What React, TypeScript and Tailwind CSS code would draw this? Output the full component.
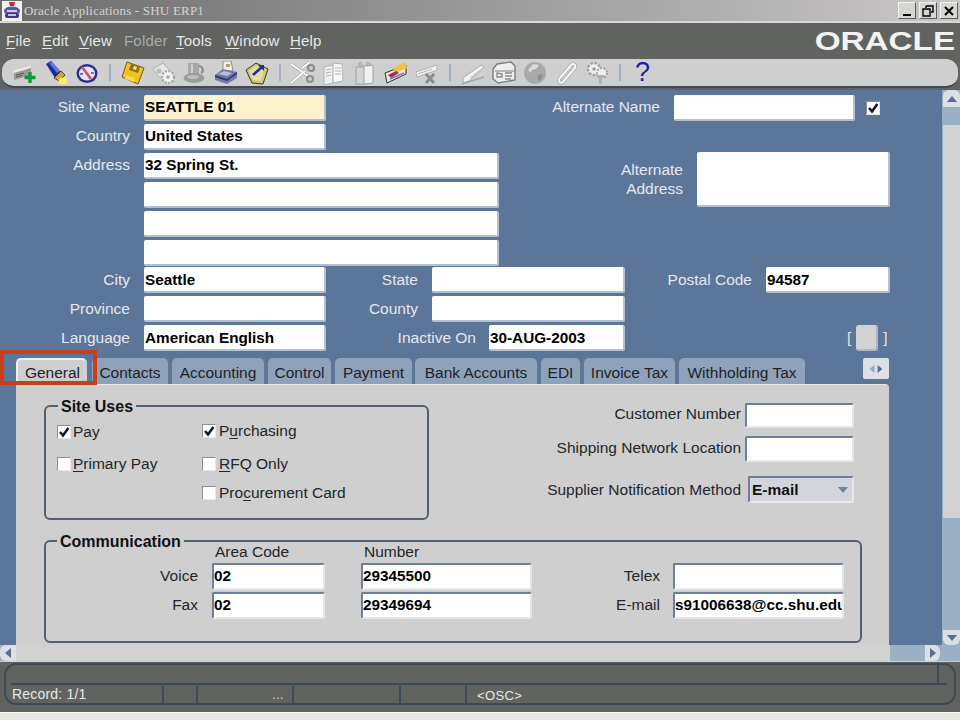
import React from "react";

const onBlue = "text-[#e4e8ee]";

function Label({ className = "", children }: { className?: string; children: React.ReactNode }) {
  return <span className={`shrink-0 text-right whitespace-nowrap ${className}`}>{children}</span>;
}

// white field on the blue canvas
function Field({ className = "", value = "" }: { className?: string; value?: string }) {
  return (
    <div className={`shrink-0 h-[26px] rounded-[2px] bg-white border-r-2 border-b-2 border-[#b4c0cf] pl-[1px] text-[15.3px] font-bold text-black leading-[26px] whitespace-nowrap overflow-hidden ${className}`}>
      {value}
    </div>
  );
}

// sunken field on the gray tab page
function InsetField({ className = "", value = "" }: { className?: string; value?: string }) {
  return (
    <div className={`shrink-0 rounded-[2px] bg-white border-t-2 border-l-2 border-[#6d7f99] border-r-2 border-b-2 border-r-[#e6e6e6] border-b-[#e6e6e6] text-[15.3px] font-bold text-black leading-[22px] whitespace-nowrap overflow-hidden ${className}`}>
      {value}
    </div>
  );
}

function Check({ checked = false, className = "" }: { checked?: boolean; className?: string }) {
  return (
    <span className={`shrink-0 inline-flex items-center justify-center w-[14px] h-[14px] bg-white border-t border-l border-[#8a8f98] border-b border-r border-b-[#e8e8e8] border-r-[#e8e8e8] ${className}`}>
      {checked && (
        <svg width="12" height="12" viewBox="0 0 12 12">
          <path d="M2 6l3 3.4L10.4 2" fill="none" stroke="#10182c" strokeWidth="2.6" />
        </svg>
      )}
    </span>
  );
}

function Ul({ children }: { children: React.ReactNode }) {
  return <span className="underline underline-offset-2">{children}</span>;
}

const tabs = [
  { name: "Contacts", cls: "ml-[5px] w-[76px]" },
  { name: "Accounting", cls: "ml-[4px] w-[92px]" },
  { name: "Control", cls: "ml-[4px] w-[63px]" },
  { name: "Payment", cls: "ml-[4px] w-[77px]" },
  { name: "Bank Accounts", cls: "ml-[3px] w-[122px]" },
  { name: "EDI", cls: "ml-[4px] w-[39px]" },
  { name: "Invoice Tax", cls: "ml-[4px] w-[91px]" },
  { name: "Withholding Tax", cls: "ml-[4px] w-[126px]" },
];

function TitleIcon() {
  return (
    <svg width="20" height="20" viewBox="0 0 20 20" className="shrink-0">
      <rect width="20" height="20" fill="#f1eef2" />
      <path d="M7 1h6l-1 4H8z" fill="#c8243a" />
      <ellipse cx="10" cy="10" rx="8" ry="4.5" fill="#5a57a8" />
      <rect x="3" y="12" width="14" height="5" rx="2" fill="#3e3b8c" />
      <path d="M5 10h10M6 14h8" stroke="#f4f1f4" strokeWidth="1.4" />
    </svg>
  );
}

function WinButton({ children, className = "" }: { children: React.ReactNode; className?: string }) {
  return (
    <div className={`w-[18px] h-[17px] flex items-center justify-center bg-[#d8d6d2] border-r border-b border-[#5c5c5c] border-t border-l border-t-[#f2f2f2] border-l-[#f2f2f2] ${className}`}>
      {children}
    </div>
  );
}

const icons: Record<string, React.ReactNode> = {
  add: (
    <>
      <path d="M1 9l17-5v10L1 19z" fill="#9a9a98" />
      <path d="M1 9l17-5v3L1 12z" fill="#e8e8e4" />
      <path d="M3 14l8-2M3 16l6-1.500" stroke="#555" strokeWidth="1" />
      <path d="M17 11v11M11.500 16.500h11" stroke="#0f9a38" strokeWidth="3.400" />
    </>
  ),
  torch: (
    <>
      <path d="M2 3l5-3 10 11-6 6z" fill="#1c2a9c" />
      <path d="M5 2l3-1 8 9-3 2z" fill="#6677e0" />
      <path d="M10 17l7-7 4 4-6 6z" fill="#d8a420" stroke="#3a2a10" strokeWidth="0.800" />
      <ellipse cx="19" cy="20" rx="4.500" ry="3.500" fill="#f3ef70" />
    </>
  ),
  compass: (
    <>
      <ellipse cx="12" cy="12.500" rx="10.500" ry="9.500" fill="#2c2f86" />
      <ellipse cx="12" cy="12.500" rx="8" ry="7" fill="#e4e4f2" />
      <path d="M7 6l9 12" stroke="#d2506a" strokeWidth="2.600" />
      <path d="M5 13h3M16 12h3" stroke="#4a4ea8" strokeWidth="1.500" />
    </>
  ),
  save: (
    <>
      <path d="M6 1l17 6-6 16L1 16z" fill="#f2c21c" stroke="#7a5a10" strokeWidth="1" />
      <path d="M10 3l9 3-2 6-9-3z" fill="#8a7420" />
      <path d="M13 5l3 1-1 3-3-1z" fill="#f6e58a" />
      <path d="M5 14l9 3-1 4-9-3z" fill="#f8da50" />
    </>
  ),
  gears: (
    <>
      <path d="M1 8l10-6 7 8-10 7z" fill="#e6e6e6" stroke="#b0b0b0" />
      <circle cx="16" cy="16" r="6" fill="#f2f2f2" stroke="#a8a8a8" strokeWidth="2.400" strokeDasharray="2 1.500" />
      <circle cx="7" cy="10" r="2.500" fill="#bdbdbd" />
      <circle cx="16" cy="16" r="1.800" fill="#a8a8a8" />
    </>
  ),
  mug: (
    <>
      <path d="M5 2h11v13H5z" fill="#a8a8a8" />
      <path d="M8 3h2v11H8z" fill="#d0d0d0" />
      <path d="M16 5a5 4 0 0 1 2 7" fill="none" stroke="#8c8c8c" strokeWidth="2.200" />
      <ellipse cx="11" cy="17" rx="10.500" ry="5" fill="#9c9c9c" />
      <ellipse cx="10" cy="16" rx="6" ry="2" fill="#bebebe" />
    </>
  ),
  printer: (
    <>
      <path d="M9 0h8l2 10H9z" fill="#f4f2e8" stroke="#777" strokeWidth="0.800" />
      <path d="M12 3h4v3h-4z" fill="#b0a070" />
      <path d="M1 14l8-6 14 3v6l-10 6-12-4z" fill="#7678ac" />
      <path d="M1 14l12 4 10-7v2l-10 7-12-4z" fill="#33356e" />
      <path d="M4 13l6-3 8 2-5 3z" fill="#bcbcd8" />
    </>
  ),
  folder: (
    <>
      <path d="M1 9l10-7 12 6-5 15-11-1z" fill="#cfc77a" stroke="#3a3a20" strokeWidth="1" />
      <path d="M4 10l7-5 8 4-3 11-8-1z" fill="#e4dfa0" />
      <path d="M8 14l9-8" stroke="#1f2ea8" strokeWidth="2.600" />
      <path d="M13 4h6v6z" fill="#1f2ea8" />
    </>
  ),
  scissors: (
    <>
      <path d="M0 3l17 12M0 22l14-12M11 7l8-6" stroke="#a8a8a8" strokeWidth="3.200" />
      <path d="M0 3l17 12M0 22l14-12M11 7l8-6" stroke="#f8f8f8" strokeWidth="2" />
      <circle cx="20" cy="7" r="3" fill="none" stroke="#8e8e8e" strokeWidth="2.200" />
      <circle cx="19" cy="18" r="3" fill="none" stroke="#8e8e8e" strokeWidth="2.200" />
    </>
  ),
  copy: (
    <>
      <path d="M2 6l9-2v18l-9 2z" fill="#f0f0f0" stroke="#b4b4b4" />
      <path d="M11 2l9 1 1 17-10 2z" fill="#f8f8f8" stroke="#b4b4b4" />
      <path d="M4 9l5-1M4 12l5-1M4 15l5-1M13 7h6M13 10h6M13 13h6" stroke="#b4b4b4" />
    </>
  ),
  paste: (
    <>
      <path d="M3 6h9v17H3z" fill="#d4d4d4" stroke="#a2a2a2" />
      <path d="M11 5l9-1v18l-9 1z" fill="#f2f2f2" stroke="#a2a2a2" />
      <path d="M6 2l2-1 2 4H6zM14 1l3 1v3h-3z" fill="#bdbdbd" stroke="#9a9a9a" strokeWidth="0.600" />
    </>
  ),
  clearField: (
    <>
      <path d="M1 12l21-8v9L3 22z" fill="#e6e6e0" stroke="#333" strokeWidth="1" />
      <path d="M9 7l12-6 2 6-12 5z" fill="#eec63c" />
      <path d="M4 14l8-4 3 2-8 5z" fill="#a8305a" />
      <path d="M6 18l14-6" stroke="#8c7ab0" strokeWidth="1.500" />
    </>
  ),
  clearRec: (
    <>
      <path d="M1 11l21-7v5L2 16z" fill="#f0f0f0" stroke="#b4b4b4" />
      <path d="M11 13l8 9M19 13l-8 9" stroke="#8c8c8c" strokeWidth="3" />
      <path d="M3 13l14-5" stroke="#b0b0b0" />
    </>
  ),
  pen: (
    <>
      <path d="M2 17l18-13 3 2L8 20l-6 2z" fill="#f2f2f2" stroke="#a8a8a8" />
      <path d="M1 23l22-7" stroke="#a8a8a8" strokeWidth="1.400" />
      <path d="M9 17l9-7" stroke="#c4c4c4" />
    </>
  ),
  trans: (
    <>
      <path d="M1 8l4-5 14-2 4 4v14l-17 3-5-4z" fill="#eeeeee" stroke="#7c7c7c" strokeWidth="1.400" />
      <path d="M3 10h19" stroke="#808080" />
      <path d="M5 12l5 1v3H5zM13 12h7M13 15h7M13 18h6" stroke="#8c8c8c" fill="none" strokeWidth="1.400" />
    </>
  ),
  globe: (
    <>
      <circle cx="12" cy="12" r="11" fill="#a9a9a9" />
      <path d="M5 9l5-6 6 1-3 4-4 1-1 3z" fill="#dadada" />
      <path d="M15 14l5-1-2 6-3 1z" fill="#8e8e8e" />
    </>
  ),
  clip: (
    <>
      <path d="M5 18L17 4c3-3 6 1 3 4L9 21c-3 2-6-1-3-4l10-11" fill="none" stroke="#a4a4a4" strokeWidth="3.400" />
      <path d="M5 18L17 4c3-3 6 1 3 4L9 21c-3 2-6-1-3-4l10-11" fill="none" stroke="#f8f8f8" strokeWidth="2" />
    </>
  ),
  zoomFlex: (
    <>
      <circle cx="9" cy="8" r="6" fill="#efefef" stroke="#a0a0a0" strokeWidth="2.400" strokeDasharray="2.500 1.500" />
      <circle cx="17" cy="12" r="5" fill="#efefef" stroke="#a0a0a0" strokeWidth="2" strokeDasharray="2 1.500" />
      <path d="M11 14h9l-3 4v5h-3v-5z" fill="#b0b0b0" />
      <circle cx="9" cy="8" r="1.800" fill="#9c9c9c" />
    </>
  ),
};

function Tool({ name }: { name: string }) {
  return (
    <div className="w-[31px] shrink-0 flex justify-center">
      <svg width="24" height="24" viewBox="0 0 24 24">{icons[name]}</svg>
    </div>
  );
}

function Sep() {
  return (
    <div className="w-[15px] shrink-0 flex justify-center">
      <div className="w-[2px] h-[17px] bg-[#a3afbc]" />
    </div>
  );
}

function Arrow({ dir, className = "" }: { dir: "up" | "down" | "left" | "right"; className?: string }) {
  const d = { up: "M0 8L5 2l5 6z", down: "M0 2l5 6 5-6z", left: "M8 0L2 5l6 5z", right: "M2 0l6 5-6 5z" }[dir];
  return (
    <svg width="10" height="10" viewBox="0 0 10 10" className={className}>
      <path d={d} fill="#566f92" />
    </svg>
  );
}

export default function App() {
  return (
    <div className="w-[960px] h-[720px] overflow-hidden flex flex-col bg-[#616361] text-[15.5px] font-['Liberation_Sans',Arial,sans-serif]">
      {/* window title */}
      <div className="h-[23px] shrink-0 flex items-center pl-[2px] pr-[2px] border-b-2 border-[#d8d8d4] bg-gradient-to-r from-[#6c6c6c] via-[#9a9a9a] to-[#c9c6c8]">
        <TitleIcon />
        <span className="ml-[2px] text-[13px] text-[#d4d4d4] font-['Liberation_Serif',serif] tracking-[0.2px] whitespace-nowrap">
          Oracle Applications - SHU ERP1
        </span>
        <div className="ml-auto flex gap-[3px] items-center">
          <WinButton>
            <div className="w-[8px] h-[2px] bg-black mt-[8px]" />
          </WinButton>
          <WinButton>
            <svg width="12" height="12" viewBox="0 0 12 12">
              <path d="M4 1h7v6H9M4 1v2M1 4h7v7H1z" fill="none" stroke="#000" strokeWidth="1.400" />
            </svg>
          </WinButton>
          <WinButton>
            <svg width="12" height="12" viewBox="0 0 12 12">
              <path d="M2 2l8 8M10 2l-8 8" stroke="#000" strokeWidth="2" />
            </svg>
          </WinButton>
        </div>
      </div>

      {/* menu */}
      <div className="h-[36px] shrink-0 flex items-center pl-[6px] text-[15px] text-[#e6e8e8] tracking-[0.2px]">
        <span className="w-[36px]"><Ul>F</Ul>ile</span>
        <span className="w-[37px]"><Ul>E</Ul>dit</span>
        <span className="w-[45px]"><Ul>V</Ul>iew</span>
        <span className="w-[52px] text-[#a8aaaa]">Folder</span>
        <span className="w-[49px]"><Ul>T</Ul>ools</span>
        <span className="w-[65px]"><Ul>W</Ul>indow</span>
        <span><Ul>H</Ul>elp</span>
        <div className="ml-auto mr-[5px] w-[140px] flex justify-center">
          <span className="inline-block font-bold text-[26px] tracking-normal leading-none text-[#f2f2f0] scale-x-[1.28] whitespace-nowrap">ORACLE</span>
        </div>
      </div>

      {/* toolbar */}
      <div className="h-[31px] shrink-0 pl-[2px] pr-[2px] pb-[2px]">
        <div className="h-[29px] flex items-center pl-[7px] rounded-[12px] bg-[#cfcfcf] border-b-2 border-[#3f4a58]">
          <Tool name="add" />
          <Tool name="torch" />
          <Tool name="compass" />
          <Sep />
          <Tool name="save" />
          <Tool name="gears" />
          <Tool name="mug" />
          <Tool name="printer" />
          <Tool name="folder" />
          <Sep />
          <Tool name="scissors" />
          <Tool name="copy" />
          <Tool name="paste" />
          <Tool name="clearField" />
          <Tool name="clearRec" />
          <Sep />
          <Tool name="pen" />
          <Tool name="trans" />
          <Tool name="globe" />
          <Tool name="clip" />
          <Tool name="zoomFlex" />
          <Sep />
          <div className="w-[31px] shrink-0 text-center text-[27px] leading-none text-[#1c1ca6]">?</div>
        </div>
      </div>

      {/* form + vertical scrollbar */}
      <div className="h-[555px] shrink-0 flex">
        <div className={`w-[942px] shrink-0 bg-[#5b7698] pt-[3px] ${onBlue}`}>
          <div className="flex items-center h-[29px]">
            <Label className="w-[130px] pb-[2px]">Site Name</Label>
            <Field className="ml-[14px] w-[182px] !bg-[#fdf2cd] !leading-[24px]" value="SEATTLE 01" />
            <Label className="w-[334px] pb-[2px]">Alternate Name</Label>
            <Field className="ml-[14px] w-[181px]" />
            <Check checked className="ml-[11px]" />
          </div>
          <div className="flex items-center h-[29px]">
            <Label className="w-[130px] pb-[2px]">Country</Label>
            <Field className="ml-[14px] w-[182px] !leading-[24px]" value="United States" />
          </div>
          <div className="flex">
            <div className="w-[499px] shrink-0">
              <div className="flex items-center h-[29px]">
                <Label className="w-[130px] pb-[2px]">Address</Label>
                <Field className="ml-[14px] w-[355px] !leading-[24px]" value="32 Spring St." />
              </div>
              <div className="flex items-center h-[29px]">
                <Field className="ml-[144px] w-[355px]" />
              </div>
              <div className="flex items-center h-[29px]">
                <Field className="ml-[144px] w-[355px]" />
              </div>
              <div className="flex items-center h-[29px]">
                <Field className="ml-[144px] w-[355px]" />
              </div>
            </div>
            <Label className="w-[184px] mt-[9px] leading-[19px]">
              Alternate
              <br />
              Address
            </Label>
            <Field className="ml-[14px] mt-[1px] w-[193px] !h-[55px]" />
          </div>
          <div className="flex items-center h-[29px] mt-[-2px]">
            <Label className="w-[130px]">City</Label>
            <Field className="ml-[14px] w-[182px]" value="Seattle" />
            <Label className="w-[92px]">State</Label>
            <Field className="ml-[14px] w-[193px]" />
            <Label className="w-[127px]">Postal Code</Label>
            <Field className="ml-[14px] w-[124px]" value="94587" />
          </div>
          <div className="flex items-center h-[29px]">
            <Label className="w-[130px]">Province</Label>
            <Field className="ml-[14px] w-[182px]" />
            <Label className="w-[92px]">County</Label>
            <Field className="ml-[14px] w-[193px]" />
          </div>
          <div className="flex items-center h-[29px]">
            <Label className="w-[130px]">Language</Label>
            <Field className="ml-[14px] w-[182px]" value="American English" />
            <Label className="w-[150px]">Inactive On</Label>
            <Field className="ml-[13px] w-[136px]" value="30-AUG-2003" />
            <div className="ml-[222px] flex items-center gap-[5px] text-[#dfe4ea]">
              <span>[</span>
              <div className="w-[22px] h-[26px] rounded-[3px] bg-[#d2d2d2] border-r-2 border-b-2 border-[#aab6c4]" />
              <span>]</span>
            </div>
          </div>

          {/* tabs */}
          <div className="relative flex items-start h-[26px] mt-[6px] pl-[16px] text-[#1c2228]">
            <div className="w-[71px] h-[27px] rounded-t-[5px] bg-[#cfcfcf] border-t-2 border-l-2 border-[#eeeeee] text-center leading-[25px] text-[#1c2228] z-[1]">
              General
            </div>
            {tabs.map((t) => (
              <div key={t.name} className={`h-[26px] rounded-t-[5px] bg-[#8ea3bb] text-center leading-[29px] whitespace-nowrap ${t.cls}`}>
                {t.name}
              </div>
            ))}
            <div className="ml-[58px] w-[26px] h-[21px] rounded-[2px] bg-[#dde1e6] flex items-center justify-center">
              <Arrow dir="left" className="w-[8px] h-[8px] opacity-50" />
              <Arrow dir="right" className="w-[8px] h-[8px]" />
            </div>
            <div className="absolute left-0 top-[-8px] w-[97px] h-[35px] border-4 border-[#c4401c] z-[2] pointer-events-none" />
          </div>

          {/* General tab page */}
          <div className="ml-[16px] w-[873px] h-[261px] rounded-tr-[4px] bg-[#cfcfcf] border-t border-[#e6e6e6] pt-[12px] pl-[28px] text-[#22262a]">
            <div className="flex items-start">
              <fieldset className="w-[385px] h-[123px] shrink-0 rounded-[6px] border-2 border-[#55606e] pl-[11px]">
                <legend className="ml-[1px] px-[3px] relative top-[1px] text-[16px] font-bold leading-[18px] text-[#111]">Site Uses</legend>
                <div className="flex items-center h-[34px]">
                  <div className="w-[145px] flex items-center gap-[2px]">
                    <Check checked />
                    <span>Pay</span>
                  </div>
                  <div className="flex items-center gap-[3px] mt-[-3px]">
                    <Check checked />
                    <span>P<Ul>u</Ul>rchasing</span>
                  </div>
                </div>
                <div className="flex items-center h-[30px]">
                  <div className="w-[145px] flex items-center gap-[2px]">
                    <Check />
                    <span><Ul>P</Ul>rimary Pay</span>
                  </div>
                  <div className="flex items-center gap-[3px]">
                    <Check />
                    <span><Ul>R</Ul>FQ Only</span>
                  </div>
                </div>
                <div className="flex items-center h-[28px] pl-[145px] gap-[3px]">
                  <Check />
                  <span>Pro<Ul>c</Ul>urement Card</span>
                </div>
              </fieldset>

              <div className="w-[425px] shrink-0 pt-[6px] flex flex-col items-end">
                <div className="flex items-center gap-[4px]">
                  <span className="pb-[4px] leading-[18px]">Customer Number</span>
                  <InsetField className="w-[109px] h-[25px]" />
                </div>
                <div className="flex items-center gap-[4px] mt-[8px]">
                  <span className="pb-[2px] leading-[18px]">Shipping Network Location</span>
                  <InsetField className="w-[109px] h-[26px]" />
                </div>
                <div className="flex items-center gap-[7px] mt-[14px]">
                  <span>Supplier Notification Method</span>
                  <div className="w-[106px] h-[27px] shrink-0 flex items-center justify-between rounded-[2px] bg-[#d2d6dc] border-2 border-[#6d7f99] border-b-[#e6e6e6] border-r-[#e6e6e6] pl-[2px] pr-[4px] font-bold text-[#111]">
                    E-mail
                    <Arrow dir="down" className="opacity-80" />
                  </div>
                </div>
              </div>
            </div>

            <fieldset className="mt-[12px] w-[818px] h-[111px] rounded-[6px] border-2 border-[#55606e]">
              <legend className="ml-[11px] px-[3px] relative top-[1px] text-[16px] font-bold leading-[18px] text-[#111]">Communication</legend>
              <div className="flex h-[18px] mt-[-6px] leading-[16px]">
                <span className="ml-[169px] w-[149px]">Area Code</span>
                <span>Number</span>
              </div>
              <div className="flex items-center h-[29px]">
                <Label className="w-[152px] pb-[2px]">Voice</Label>
                <InsetField className="ml-[14px] w-[113px] h-[27px]" value="02" />
                <InsetField className="ml-[36px] w-[171px] h-[27px]" value="29345500" />
                <Label className="w-[128px] pb-[2px]">Telex</Label>
                <InsetField className="ml-[13px] w-[171px] h-[27px]" />
              </div>
              <div className="flex items-center h-[29px]">
                <Label className="w-[152px] pb-[2px]">Fax</Label>
                <InsetField className="ml-[14px] w-[113px] h-[27px]" value="02" />
                <InsetField className="ml-[36px] w-[171px] h-[27px]" value="29349694" />
                <Label className="w-[128px] pb-[2px]">E-mail</Label>
                <InsetField className="ml-[13px] w-[171px] h-[27px]" value="s91006638@cc.shu.edu" />
              </div>
            </fieldset>
          </div>
        </div>

        {/* vertical scrollbar */}
        <div className="flex-1 flex flex-col bg-[#9bafc5] pl-[1px]">
          <div className="h-[17px] rounded-t-[6px] bg-[#dcdfe3] flex items-center justify-center">
            <Arrow dir="up" />
          </div>
          <div className="h-[18px]" />
          <div className="h-[393px] bg-[#d2d2d2]" />
          <div className="flex-1" />
          <div className="h-[15px] rounded-b-[6px] bg-[#dcdfe3] flex items-center justify-center">
            <Arrow dir="down" />
          </div>
        </div>
      </div>

      {/* horizontal scrollbar */}
      <div className="h-[17px] shrink-0 flex bg-[#9bafc5] border-b border-[#c4d0dc]">
        <div className="w-[16px] rounded-l-[6px] bg-[#dcdfe3] flex items-center justify-center">
          <Arrow dir="left" />
        </div>
        <div className="w-[874px] bg-[#d2d2d2]" />
        <div className="w-[35px]" />
        <div className="w-[15px] rounded-r-[6px] bg-[#dcdfe3] flex items-center justify-center">
          <Arrow dir="right" />
        </div>
      </div>

      {/* status bar */}
      <div className="h-[50px] shrink-0 pt-[1px] px-[4px]">
        <div className="h-[42px] rounded-[12px] border-2 border-[#3f4a58] text-[#e6e8e8]">
          <div className="h-[20px] ml-[5px] mr-[7px] border-b-2 border-[#3f4a58] flex justify-end">
            <div className="w-[2px] h-full mr-[8px] bg-[#3f4a58]" />
          </div>
          <div className="h-[18px] mt-[1px] flex items-center text-[14px] leading-[17px]">
            <div className="w-[158px] h-full pl-[6px] border-r-2 border-[#3f4a58] tracking-[0.2px]">Record: 1/1</div>
            <div className="w-[34px] h-full border-r-2 border-[#3f4a58]" />
            <div className="w-[96px] h-full pl-[74px] border-r-2 border-[#3f4a58] text-[#c8c8c8]">...</div>
            <div className="w-[107px] h-full border-r-2 border-[#3f4a58]" />
            <div className="w-[66px] h-full border-r-2 border-[#3f4a58]" />
            <div className="pl-[10px] text-[13px] tracking-[0.4px]">&lt;OSC&gt;</div>
          </div>
        </div>
      </div>

      <div className="flex-1 bg-[#e8e8e2] border-t border-[#f8f8f4]" />
    </div>
  );
}
